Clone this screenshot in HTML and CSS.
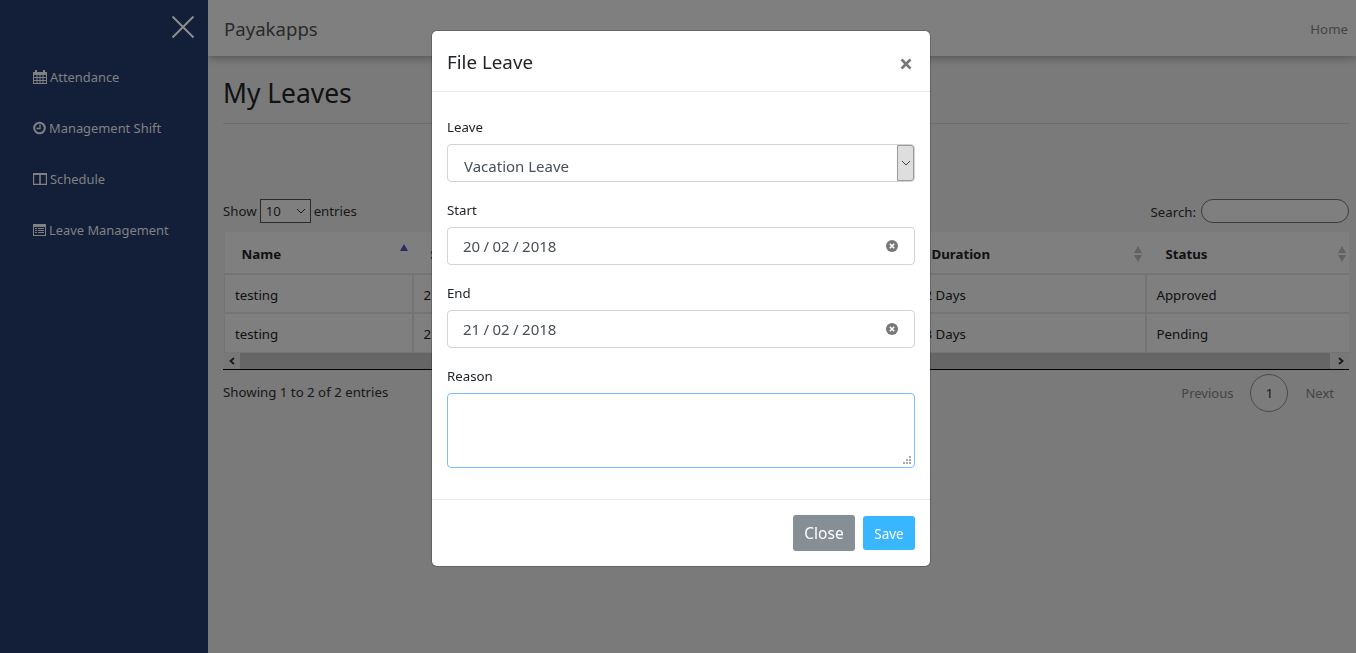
FILE: index.html
```html
<!DOCTYPE html>
<html>
  <head>
    <title>Payakapps</title>
    <link rel="stylesheet" href="styles.css">
  </head>
  <body>
    <div class="app">
      <nav class="sidenav">
        <div class="sidenav-top">
          <svg class="sidenav-close" width="24" height="24" viewBox="0 0 24 24"><path d="M1.500 1.500L22.500 22.500M22.500 1.500L1.500 22.500" stroke="currentColor" stroke-width="2" fill="none"/></svg>
        </div>
        <a class="sidenav-link">
          <svg class="nav-icon" width="14" height="14" viewBox="0 0 14 14"><path fill="currentColor" fill-rule="evenodd" d="M0 2h2V0h2v2h6V0h2v2h2v12H0zM1 5v2h2.500V5zM4.500 5v2h2V5zM7.500 5v2h2V5zM10.500 5v2H13V5zM1 8v2h2.500V8zM4.500 8v2h2V8zM7.500 8v2h2V8zM10.500 8v2H13V8zM1 11v2h2.500v-2zM4.500 11v2h2v-2zM7.500 11v2h2v-2zM10.500 11v2H13v-2z"/></svg>
          Attendance
        </a>
        <a class="sidenav-link">
          <svg class="nav-icon" width="13" height="14" viewBox="0 0 13 14"><circle cx="6.500" cy="7" r="5.300" fill="none" stroke="currentColor" stroke-width="2"/><path d="M7 3.500V7.500H3.500" fill="none" stroke="currentColor" stroke-width="1.300"/></svg>
          Management Shift
        </a>
        <a class="sidenav-link">
          <svg class="nav-icon" width="14" height="14" viewBox="0 0 14 14"><path fill="currentColor" fill-rule="evenodd" d="M0 1h14v12H0zM1.200 3v8.800h5V3zM7.800 3v8.800h5V3z"/></svg>
          Schedule
        </a>
        <a class="sidenav-link">
          <svg class="nav-icon" width="13" height="14" viewBox="0 0 13 14"><path fill="currentColor" fill-rule="evenodd" d="M0 1h13v12H0zM1 4v8h11V4z"/><path fill="currentColor" d="M2 5h2v1H2zM5 5h6v1H5zM2 7h2v1H2zM5 7h6v1H5zM2 9h2v1H2zM5 9h6v1H5z"/></svg>
          Leave Management
        </a>
      </nav>

      <div class="main">
        <header class="navbar">
          <span class="brand">Payakapps</span>
          <a class="nav-home">Home</a>
        </header>

        <div class="content">
          <h1 class="page-title">My Leaves</h1>
          <hr class="page-rule">

          <div class="table-controls">
            <div class="length">
              Show
              <span class="length-select">10
                <svg width="10" height="6" viewBox="0 0 10 6"><path d="M1 1l4 4 4-4" fill="none" stroke="currentColor"/></svg>
              </span>
              entries
            </div>
            <div class="search">
              Search:
              <input class="search-input" type="text">
            </div>
          </div>

          <div class="table-wrap">
            <table class="leaves">
              <colgroup>
                <col class="col-name"><col class="col-mid"><col class="col-mid"><col class="col-mid"><col class="col-duration"><col>
              </colgroup>
              <thead>
                <tr>
                  <th class="th-name">Name<span class="sort sort-asc"></span></th>
                  <th>S<span class="sort"></span></th>
                  <th><span class="sort"></span></th>
                  <th><span class="sort"></span></th>
                  <th>Duration<span class="sort"></span></th>
                  <th class="th-status">Status<span class="sort sort-last"></span></th>
                </tr>
              </thead>
              <tbody>
                <tr><td>testing</td><td>2</td><td></td><td></td><td>2 Days</td><td>Approved</td></tr>
                <tr><td>testing</td><td>2</td><td></td><td></td><td>3 Days</td><td>Pending</td></tr>
              </tbody>
            </table>
            <div class="hscroll">
              <span class="hscroll-btn">
                <svg width="8" height="8" viewBox="0 0 8 8"><path d="M6 1L2.500 4 6 7" fill="none" stroke="currentColor" stroke-width="1.800"/></svg>
              </span>
              <span class="hscroll-thumb"></span>
              <span class="hscroll-btn">
                <svg width="8" height="8" viewBox="0 0 8 8"><path d="M2 1l3.500 3L2 7" fill="none" stroke="currentColor" stroke-width="1.800"/></svg>
              </span>
            </div>
          </div>

          <div class="table-footer">
            <div class="info">Showing 1 to 2 of 2 entries</div>
            <div class="pager">
              <a>Previous</a>
              <a class="pager-current">1</a>
              <a>Next</a>
            </div>
          </div>
        </div>
      </div>
    </div>

    <div class="backdrop"></div>

    <div class="modal">
      <div class="modal-header">
        <h5 class="modal-title">File Leave</h5>
        <svg class="modal-x" width="12" height="12" viewBox="0 0 12 12"><path d="M1.500 1.500l9 9M10.500 1.500l-9 9" stroke="currentColor" stroke-width="2.600" fill="none"/></svg>
      </div>
      <div class="modal-body">
        <div class="field">
          <label>Leave</label>
          <div class="control control-select">
            <span class="select-value">Vacation Leave</span>
            <span class="select-arrow">
              <svg width="10" height="6" viewBox="0 0 10 6"><path d="M1 1l4 4 4-4" fill="none" stroke="currentColor"/></svg>
            </span>
          </div>
        </div>
        <div class="field">
          <label>Start</label>
          <div class="control control-date">
            <span>20 / 02 / 2018</span>
            <svg width="12" height="12" viewBox="0 0 12 12"><circle cx="6" cy="6" r="6" fill="#777"/><path d="M3.800 3.800l4.400 4.400M8.200 3.800L3.800 8.200" stroke="#fff" stroke-width="1.600"/></svg>
          </div>
        </div>
        <div class="field">
          <label>End</label>
          <div class="control control-date">
            <span>21 / 02 / 2018</span>
            <svg width="12" height="12" viewBox="0 0 12 12"><circle cx="6" cy="6" r="6" fill="#777"/><path d="M3.800 3.800l4.400 4.400M8.200 3.800L3.800 8.200" stroke="#fff" stroke-width="1.600"/></svg>
          </div>
        </div>
        <div class="field">
          <label>Reason</label>
          <div class="control control-area">
            <svg class="grip" width="8" height="8" viewBox="0 0 8 8"><path fill="#aaa" d="M6 0h2v2H6zM3 3h2v2H3zM6 3h2v2H6zM0 6h2v2H0zM3 6h2v2H3zM6 6h2v2H6z"/></svg>
          </div>
        </div>
      </div>
      <div class="modal-footer">
        <button class="btn btn-close">Close</button>
        <button class="btn btn-save">Save</button>
      </div>
    </div>
  </body>
</html>
```

FILE: styles.css
```css
* {
  box-sizing: border-box;
}
html, body {
  height: 100%;
}
body {
  margin: 0;
  overflow: hidden;
  font-family: "Noto Sans", "Open Sans", sans-serif;
  font-size: 13.25px;
  color: #212529;
  background: #f4f4f4;
}
.app {
  display: flex;
  height: 100%;
}

/* sidebar stays above the backdrop */
.sidenav {
  position: relative;
  z-index: 20;
  flex: 0 0 208px;
  background: #131f39;
  color: #818181;
  font-size: 12.9px;
}
.sidenav-top {
  display: flex;
  justify-content: flex-end;
  height: 51px;
  padding: 15px 13px 0 0;
}
.sidenav-close {
  color: #8c8c8c;
}
.sidenav-link {
  display: flex;
  align-items: center;
  gap: 3px;
  height: 51px;
  padding-left: 33px;
}

.main {
  flex: 1;
  min-width: 0;
}
.navbar {
  display: flex;
  align-items: center;
  justify-content: space-between;
  height: 56px;
  padding: 0 8px 0 16px;
  background: #ffffff;
  box-shadow: 0 2px 8px rgba(0, 0, 0, 0.3);
}
.brand {
  font-size: 18.6px;
  color: #555;
}
.nav-home {
  padding-top: 2px;
  color: #8a8a8a;
}

.content {
  padding: 0 7px 0 15px;
}
.page-title {
  margin: 19px 0 0;
  font-size: 26.4px;
  font-weight: 400;
  line-height: 37px;
}
.page-rule {
  margin: 11px 0 0;
  border: 0;
  border-top: 1px solid #dcdcdc;
}
.table-controls {
  display: flex;
  align-items: center;
  justify-content: space-between;
  height: 26px;
  margin-top: 74px;
  color: #333;
}
.length {
  display: flex;
  align-items: center;
  gap: 3px;
}
.length-select {
  display: flex;
  align-items: center;
  justify-content: space-between;
  width: 51px;
  height: 24px;
  padding: 0 4px 0 5px;
  border: 1px solid #555;
  background: #fff;
}
.search {
  display: flex;
  align-items: center;
  gap: 5px;
  padding-top: 1px;
}
.search-input {
  width: 148px;
  height: 24px;
  margin-top: -1px;
  border: 1px solid #777;
  border-radius: 12px;
  background: #fff;
}

.table-wrap {
  margin-top: 8px;
  border-bottom: 1px solid #000;
}
.leaves {
  table-layout: fixed;
  border-collapse: collapse;
  margin-left: 1px;
  width: calc(100% - 1px);
}
.col-name {
  width: 188px;
}
.col-mid {
  width: 167px;
}
.col-duration {
  width: 232px;
}
.leaves th {
  position: relative;
  height: 42px;
  padding: 2px 18px 0;
  text-align: left;
  font-weight: 700;
  background: #fff;
  border-bottom: 2px solid #e8e8e8;
}
.leaves .th-name {
  padding-left: 17px;
}
.leaves .th-status {
  padding-left: 20px;
}
.leaves td {
  height: 39px;
  padding: 2px 10px 0;
  background: #fff;
  border: 2px solid #e8e8e8;
}
.leaves tbody tr:last-child td {
  border-bottom-width: 1px;
}
.leaves td:first-child {
  border-left-width: 1px;
}
.leaves td:last-child {
  border-right: 0;
}
.sort {
  position: absolute;
  top: 14px;
  right: 4px;
  width: 0;
  height: 0;
  border-left: 4px solid transparent;
  border-right: 4px solid transparent;
  border-bottom: 7px solid #c4c4c4;
}
.sort::after {
  content: "";
  position: absolute;
  top: 9px;
  left: -4px;
  border-left: 4px solid transparent;
  border-right: 4px solid transparent;
  border-top: 7px solid #c4c4c4;
}
.sort-last {
  right: 3px;
}
.sort-asc {
  top: 12px;
  right: 5px;
  border-bottom-color: #5858c8;
}
.sort-asc::after {
  display: none;
}
.hscroll {
  display: flex;
  height: 16px;
  margin-left: 1px;
  background: #f1f1f1;
}
.hscroll-btn {
  display: flex;
  align-items: center;
  justify-content: center;
  flex: 0 0 16px;
  color: #333;
}
.hscroll-thumb {
  flex: 1;
  background: #cdcdcd;
  margin-right: 3px;
}

.table-footer {
  display: flex;
  justify-content: space-between;
  align-items: center;
  height: 46px;
}
.info {
  padding-bottom: 2px;
  color: #333;
}
.pager {
  display: flex;
  align-items: center;
  gap: 17px;
  padding-right: 15px;
  font-size: 13px;
  color: #888;
}
.pager-current {
  display: flex;
  align-items: center;
  justify-content: center;
  width: 38px;
  height: 38px;
  border: 1px solid #979797;
  border-radius: 50%;
  color: #333;
  background: #f8f8f8;
}

.backdrop {
  position: fixed;
  top: 0;
  right: 0;
  bottom: 0;
  left: 0;
  z-index: 10;
  background: rgba(0, 0, 0, 0.5);
}

.modal {
  position: fixed;
  top: 31px;
  left: 432px;
  z-index: 30;
  width: 498px;
  height: 535px;
  background: #fff;
  border-radius: 5px;
  box-shadow: 0 0 0 1px rgba(0, 0, 0, 0.2);
}
.modal-header {
  display: flex;
  align-items: center;
  justify-content: space-between;
  height: 61px;
  padding: 1px 18px 0 15px;
  border-bottom: 1px solid #e9ecef;
}
.modal-title {
  margin: 0;
  font-size: 18.8px;
  font-weight: 400;
}
.modal-x {
  margin-top: 4px;
  color: #777;
}
.modal-body {
  display: flex;
  flex-direction: column;
  gap: 18px;
  height: 407px;
  padding: 25px 15px 0;
}
.field label {
  display: block;
  margin-bottom: 7px;
  line-height: 20px;
}
.control {
  display: flex;
  align-items: center;
  height: 38px;
  border: 1px solid #ced4da;
  border-radius: 4px;
  font-size: 15px;
  color: #495057;
}
.control-select {
  padding-left: 16px;
}
.select-value {
  flex: 1;
  padding-top: 6px;
}
.select-arrow {
  display: flex;
  align-items: center;
  justify-content: center;
  align-self: stretch;
  width: 17px;
  border: 1px solid #9a9a9a;
  border-radius: 0 3px 3px 0;
  background: #dedede;
  color: #444;
}
.control-date {
  justify-content: space-between;
  padding: 0 16px 0 15px;
  word-spacing: -0.5px;
}
.control-area {
  position: relative;
  height: 75px;
  border-color: #80bdff;
}
.grip {
  position: absolute;
  right: 3px;
  bottom: 3px;
}
.modal-footer {
  display: flex;
  justify-content: flex-end;
  align-items: center;
  gap: 8px;
  height: 67px;
  padding: 0 15px;
  border-top: 1px solid #e9ecef;
}
.btn {
  border: 0;
  border-radius: 3px;
  color: #fff;
  font-family: inherit;
}
.btn-close {
  width: 62px;
  height: 36px;
  font-size: 15.5px;
  background: #868e96;
}
.btn-save {
  width: 52px;
  height: 34px;
  padding-top: 3px;
  font-size: 13.5px;
  background: #38b6ff;
}
```
